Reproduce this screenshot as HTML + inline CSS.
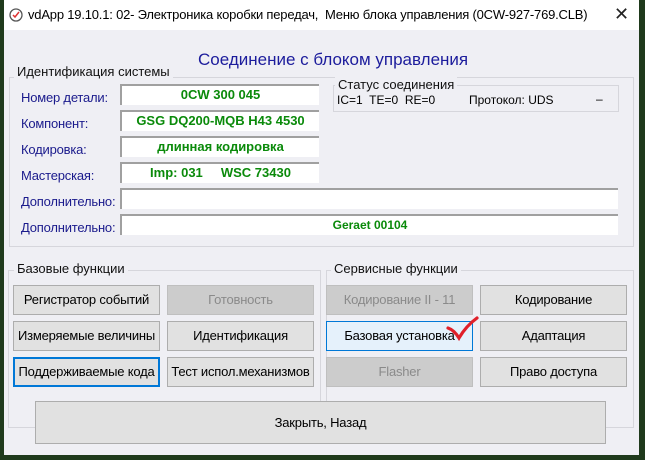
<!DOCTYPE html>
<html><head><meta charset="utf-8"><style>
*{box-sizing:border-box;margin:0;padding:0}
body{width:645px;height:460px;background:#1f3a1c;position:relative;overflow:hidden;font-family:"Liberation Sans","DejaVu Sans",sans-serif;font-size:13px;color:#000}
.win{position:absolute;left:4px;top:0;width:635px;height:455px;background:#efeff4}
.title{position:absolute;left:0;top:0;width:635px;height:30px;background:#fff}
.a{position:absolute;white-space:nowrap}
.grp{position:absolute;border:1px solid #d6d6dc}
.gl{position:absolute;background:#efeff4;padding:0 3px;font-size:13px;color:#111}
.lbl{position:absolute;color:#1a1a8c;font-size:13px;letter-spacing:-0.2px}
.fld{position:absolute;background:#fff;border-top:2px solid #a0a0a0;border-left:2px solid #a0a0a0;color:#0a8a0a;font-weight:bold;text-align:center;font-size:13px;line-height:18px}
.btn{position:absolute;width:147px;height:30px;background:#e1e1e1;border:1px solid #adadad;text-align:center;line-height:28px;font-size:13px;letter-spacing:-0.2px}
.dis{background:#cccccc;border-color:#bfbfbf;color:#8a8a8a}
</style></head><body>
<div class="win">
<div class="title">
<svg class="a" style="left:4px;top:7px" width="16" height="16" viewBox="0 0 16 16"><circle cx="8" cy="8" r="6" fill="none" stroke="#555" stroke-width="1.3"/><path d="M5 8l2 2 4-5" stroke="#d33" stroke-width="1.5" fill="none"/></svg>
<div class="a" style="left:24px;top:7px;font-size:13px;letter-spacing:-0.2px">vdApp 19.10.1: 02- Электроника коробки передач,&nbsp; Меню блока управления (0CW-927-769.CLB)</div>
<div class="a" style="left:610px;top:4px;font-size:18px;color:#222">✕</div>
</div>
<div class="a" style="left:194px;top:50px;font-size:17px;color:#1c1c9c">Соединение с блоком управления</div>
<div class="grp" style="left:5px;top:77px;width:625px;height:170px"></div>
<div class="gl" style="left:10px;top:64px">Идентификация системы</div>
<div class="lbl" style="left:17px;top:90px">Номер детали:</div>
<div class="lbl" style="left:17px;top:116px">Компонент:</div>
<div class="lbl" style="left:17px;top:142px">Кодировка:</div>
<div class="lbl" style="left:17px;top:168px">Мастерская:</div>
<div class="lbl" style="left:17px;top:194px">Дополнительно:</div>
<div class="lbl" style="left:17px;top:220px">Дополнительно:</div>
<div class="fld" style="left:116px;top:84px;width:199px;height:21px">0CW 300 045</div>
<div class="fld" style="left:116px;top:110px;width:199px;height:21px">GSG DQ200-MQB H43 4530</div>
<div class="fld" style="left:116px;top:136px;width:199px;height:21px">длинная кодировка</div>
<div class="fld" style="left:116px;top:162px;width:199px;height:21px">Imp: 031 &nbsp;&nbsp;&nbsp; WSC 73430</div>
<div class="fld" style="left:116px;top:188px;width:498px;height:21px"></div>
<div class="fld" style="left:116px;top:214px;width:498px;height:21px;font-size:12px">Geraet 00104</div>
<div class="grp" style="left:329px;top:85px;width:286px;height:27px"></div>
<div class="gl" style="left:331px;top:77px">Статус соединения</div>
<div class="a" style="left:333px;top:93px;font-size:12px">IC=1&nbsp; TE=0&nbsp; RE=0</div>
<div class="a" style="left:465px;top:93px;font-size:12px">Протокол: UDS</div>
<div class="a" style="left:592px;top:92px;font-size:12px">–</div>
<div class="grp" style="left:4px;top:270px;width:313px;height:158px"></div>
<div class="gl" style="left:10px;top:261px">Базовые функции</div>
<div class="grp" style="left:322px;top:270px;width:308px;height:158px"></div>
<div class="gl" style="left:327px;top:261px">Сервисные функции</div>
<div class="btn" style="left:9px;top:285px">Регистратор событий</div>
<div class="btn dis" style="left:163px;top:285px">Готовность</div>
<div class="btn dis" style="left:322px;top:285px">Кодирование II - 11</div>
<div class="btn" style="left:476px;top:285px">Кодирование</div>
<div class="btn" style="left:9px;top:321px">Измеряемые величины</div>
<div class="btn" style="left:163px;top:321px">Идентификация</div>
<div class="btn" style="left:322px;top:321px;background:#e5f1fb;border-color:#0078d7">Базовая установка</div>
<div class="btn" style="left:476px;top:321px">Адаптация</div>
<div class="btn" style="left:9px;top:357px;border:2px solid #0078d7;line-height:26px">Поддерживаемые кода</div>
<div class="btn" style="left:163px;top:357px">Тест испол.механизмов</div>
<div class="btn dis" style="left:322px;top:357px">Flasher</div>
<div class="btn" style="left:476px;top:357px">Право доступа</div>
<div class="btn" style="left:31px;top:401px;width:571px;height:43px;line-height:41px">Закрыть, Назад</div>
<svg class="a" style="left:440px;top:314px" width="40" height="30" viewBox="0 0 40 30"><path d="M4 14 Q10 16 15 24 Q22 12 33 4" stroke="#e0202a" stroke-width="3.2" fill="none" stroke-linecap="round"/></svg>
</div>
</body></html>
